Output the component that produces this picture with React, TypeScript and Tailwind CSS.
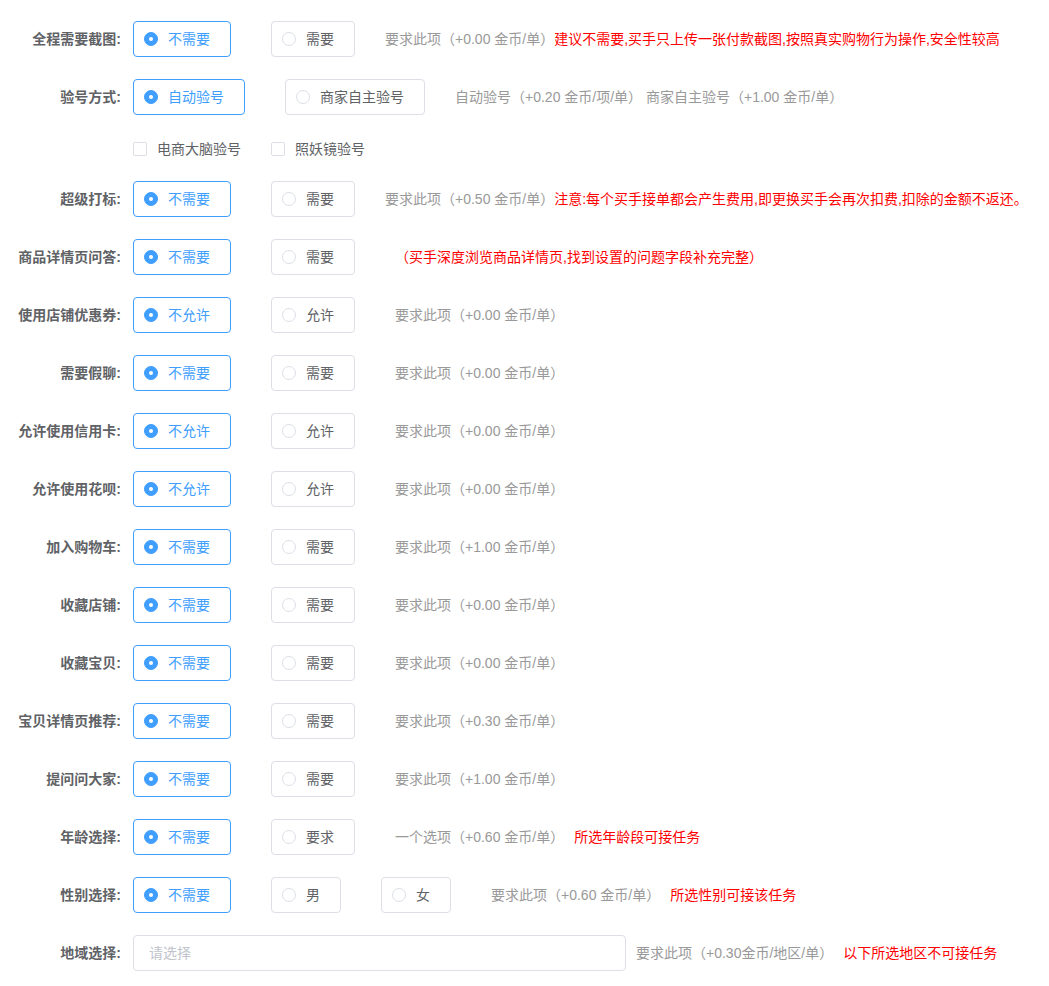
import { useState } from "react";

// 任务增值服务设置表单（Element 风格的带边框单选）

type Row = {
  label: string;
  options: string[];
  hint?: string;
  note?: string;
  hintGap?: "near" | "far"; // near: 紧跟最后一个单选 30px；far: 40px
  noteGap?: boolean;
};

const FONT = "font-['Liberation_Sans','Noto_Sans_CJK_SC',sans-serif]";

const ROWS_TOP: Row[] = [
  {
    label: "全程需要截图:",
    options: ["不需要", "需要"],
    hint: "要求此项（+0.00 金币/单）",
    note: "建议不需要,买手只上传一张付款截图,按照真实购物行为操作,安全性较高",
    hintGap: "near",
  },
  {
    label: "验号方式:",
    options: ["自动验号", "商家自主验号"],
    hint: "自动验号（+0.20 金币/项/单） 商家自主验号（+1.00 金币/单）",
    hintGap: "near",
  },
];

const ROWS: Row[] = [
  {
    label: "超级打标:",
    options: ["不需要", "需要"],
    hint: "要求此项（+0.50 金币/单）",
    note: "注意:每个买手接单都会产生费用,即更换买手会再次扣费,扣除的金额不返还。",
    hintGap: "near",
  },
  {
    label: "商品详情页问答:",
    options: ["不需要", "需要"],
    note: "（买手深度浏览商品详情页,找到设置的问题字段补充完整）",
    hintGap: "far",
  },
  { label: "使用店铺优惠券:", options: ["不允许", "允许"], hint: "要求此项（+0.00 金币/单）", hintGap: "far" },
  { label: "需要假聊:", options: ["不需要", "需要"], hint: "要求此项（+0.00 金币/单）", hintGap: "far" },
  { label: "允许使用信用卡:", options: ["不允许", "允许"], hint: "要求此项（+0.00 金币/单）", hintGap: "far" },
  { label: "允许使用花呗:", options: ["不允许", "允许"], hint: "要求此项（+0.00 金币/单）", hintGap: "far" },
  { label: "加入购物车:", options: ["不需要", "需要"], hint: "要求此项（+1.00 金币/单）", hintGap: "far" },
  { label: "收藏店铺:", options: ["不需要", "需要"], hint: "要求此项（+0.00 金币/单）", hintGap: "far" },
  { label: "收藏宝贝:", options: ["不需要", "需要"], hint: "要求此项（+0.00 金币/单）", hintGap: "far" },
  { label: "宝贝详情页推荐:", options: ["不需要", "需要"], hint: "要求此项（+0.30 金币/单）", hintGap: "far" },
  { label: "提问问大家:", options: ["不需要", "需要"], hint: "要求此项（+1.00 金币/单）", hintGap: "far" },
  {
    label: "年龄选择:",
    options: ["不需要", "要求"],
    hint: "一个选项（+0.60 金币/单）",
    note: "所选年龄段可接任务",
    hintGap: "far",
    noteGap: true,
  },
  {
    label: "性别选择:",
    options: ["不需要", "男", "女"],
    hint: "要求此项（+0.60 金币/单）",
    note: "所选性别可接该任务",
    hintGap: "far",
    noteGap: true,
  },
];

function Label({ children }: { children: React.ReactNode }) {
  return (
    <div className="w-[121px] shrink-0 text-right text-[14px] font-bold text-[#606266]">{children}</div>
  );
}

function RadioBox({ text, checked, onClick }: { text: string; checked: boolean; onClick: () => void }) {
  return (
    <button
      type="button"
      onClick={onClick}
      className={`mr-[30px] flex h-9 shrink-0 items-center rounded-[4px] border pl-[10px] pr-[20px] text-[14px] leading-none ${
        checked ? "border-[#409eff] text-[#409eff]" : "border-[#dcdfe6] text-[#606266]"
      }`}
    >
      <span
        className={`flex h-[14px] w-[14px] items-center justify-center rounded-full border ${
          checked ? "border-[#409eff] bg-[#409eff]" : "border-[#dcdfe6] bg-white"
        }`}
      >
        {checked && <span className="h-[4px] w-[4px] rounded-full bg-white" />}
      </span>
      <span className="pl-[10px]">{text}</span>
    </button>
  );
}

function Hint({ row }: { row: Row }) {
  return (
    <div className={`flex items-center whitespace-nowrap text-[14px] ${row.hintGap === "far" ? "ml-[10px]" : ""}`}>
      {row.hint && <span className="text-[#999999]">{row.hint}</span>}
      {row.note && <span className={`text-[#ff0000] ${row.noteGap ? "ml-[10px]" : ""}`}>{row.note}</span>}
    </div>
  );
}

function RadioRow({ row }: { row: Row }) {
  const [value, setValue] = useState(0);
  return (
    <div className="mb-[22px] flex h-9 items-center gap-3">
      <Label>{row.label}</Label>
      <div className="flex items-center">
        {row.options.map((o, i) => (
          <div key={o} className={i > 0 ? "ml-[10px]" : ""}>
            <RadioBox text={o} checked={value === i} onClick={() => setValue(i)} />
          </div>
        ))}
        <Hint row={row} />
      </div>
    </div>
  );
}

function Check({ text }: { text: string }) {
  const [on, setOn] = useState(false);
  return (
    <label className="mr-[30px] flex cursor-pointer items-center text-[14px] text-[#606266]">
      <span
        onClick={() => setOn(!on)}
        className={`h-[14px] w-[14px] rounded-[2px] border ${on ? "border-[#409eff] bg-[#409eff]" : "border-[#dcdfe6] bg-white"}`}
      />
      <span className="pl-[10px]">{text}</span>
    </label>
  );
}

export default function App() {
  return (
    <div className={`min-h-[986px] w-full bg-white pt-[21px] ${FONT}`}>
      {ROWS_TOP.map((r) => (
        <RadioRow key={r.label} row={r} />
      ))}

      <div className="-mt-[22px] flex h-[66px] items-center pl-[133px] pt-[2px]">
        <Check text="电商大脑验号" />
        <Check text="照妖镜验号" />
      </div>

      {ROWS.map((r) => (
        <RadioRow key={r.label} row={r} />
      ))}

      <div className="flex h-9 items-center gap-3">
        <Label>地域选择:</Label>
        <div className="flex items-center">
          <div className="flex h-9 w-[493px] items-center rounded-[4px] border border-[#dcdfe6] px-[15px] text-[14px] text-[#c0c4cc]">
            请选择
          </div>
          <div className="ml-[10px] flex items-center whitespace-nowrap text-[14px]">
            <span className="text-[#999999]">要求此项（+0.30金币/地区/单）</span>
            <span className="ml-[10px] text-[#ff0000]">以下所选地区不可接任务</span>
          </div>
        </div>
      </div>
    </div>
  );
}
